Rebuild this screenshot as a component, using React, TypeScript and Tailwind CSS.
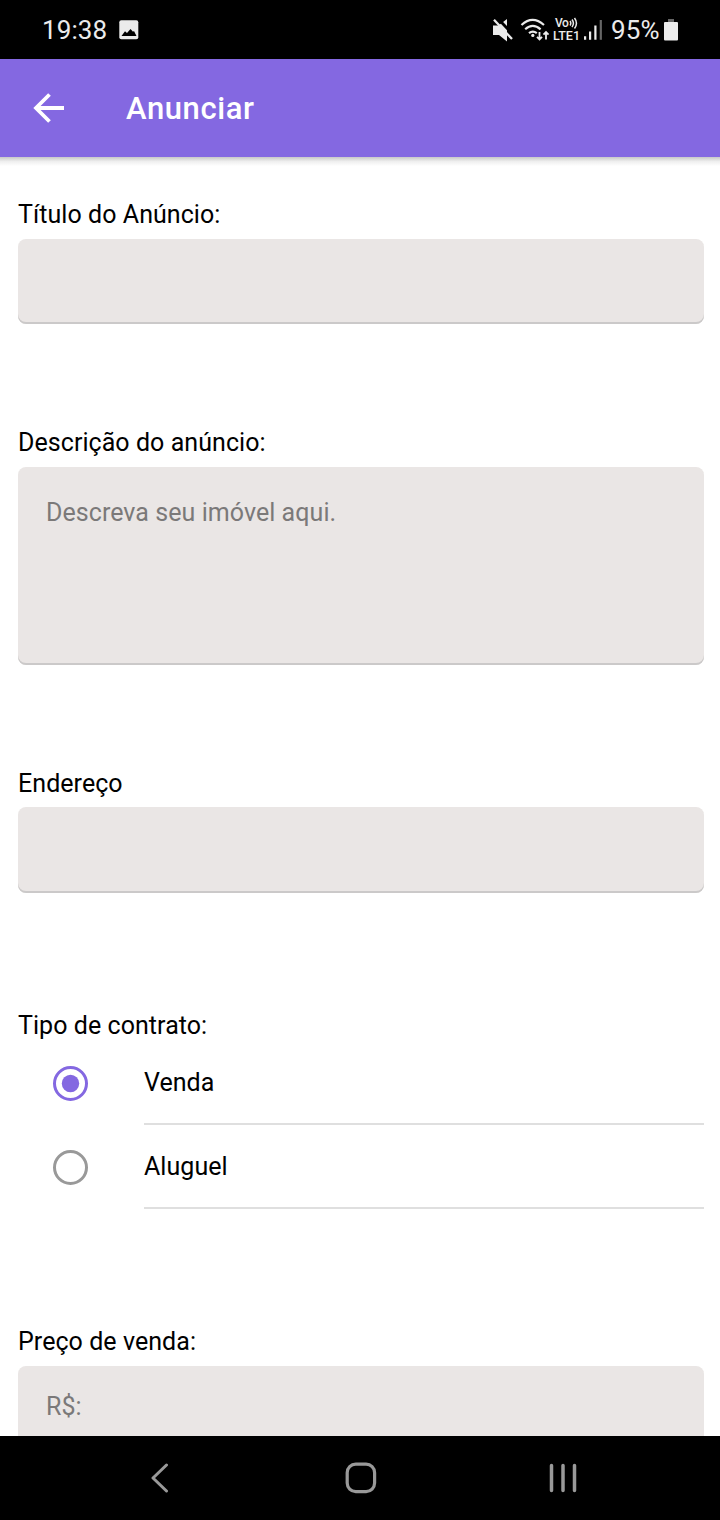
import type { ReactNode } from "react";

function Label({ children, className = "" }: { children: ReactNode; className?: string }) {
  return (
    <div className={`h-[32px] shrink-0 text-[25px] leading-[34px] tracking-[0.06px] whitespace-nowrap text-black ${className}`}>
      <span>{children}</span>
    </div>
  );
}

function Field({ placeholder, className = "" }: { placeholder?: string; className?: string }) {
  return (
    <div
      className={`w-[686px] shrink-0 overflow-hidden rounded-[8px] bg-[#eae6e5] pl-[28px] text-[25px] leading-[34px] tracking-[0.06px] text-[#7b7979] shadow-[inset_0_-2px_0_#cbc9c9] ${className}`}
    >
      {placeholder}
    </div>
  );
}

function Option({ label, checked = false }: { label: string; checked?: boolean }) {
  return (
    <div className="flex h-[84px] shrink-0 items-stretch">
      <div className="flex w-[126px] items-center pl-[35px]">
        <svg width="35" height="35" viewBox="0 0 35 35" fill="none">
          <circle cx="17.5" cy="17.5" r="16" stroke={checked ? "#8468e1" : "#999999"} strokeWidth="3" />
          {checked && <circle cx="17.5" cy="17.5" r="8.7" fill="#8468e1" />}
        </svg>
      </div>
      <div className="flex w-[560px] items-center border-b-2 border-[#dfdfdf] pt-[2px] text-[25px] leading-[32px] tracking-[0.06px] text-black">
        {label}
      </div>
    </div>
  );
}

function StatusBar() {
  return (
    <div className="flex h-[59px] shrink-0 items-center bg-black text-[#ebebeb]">
      <span className="ml-[42px] w-[77px] text-[26px] leading-[30px] tracking-[0.1px] whitespace-nowrap">19:38</span>
      <svg width="20" height="20" viewBox="0 0 20 20">
        <rect x="0.3" y="0.3" width="19" height="19" rx="2" fill="#ebebeb" />
        <path d="M2.5 16 6 11.2 8 13 11.5 9 14 11.8 15 11 17.5 16Z" fill="#000" />
      </svg>
      <svg className="ml-[353px]" width="22" height="24" viewBox="0 0 22 24" fill="none">
        <path d="M1 7.5h5.5L15 1v22.5L7 17H1Z" fill="#ebebeb" />
        <path d="M4.5 -1 22.5 18.2" stroke="#000" strokeWidth="2.8" />
        <path d="M2 1.8 20 21" stroke="#ebebeb" strokeWidth="2.3" />
      </svg>
      <svg className="ml-[6px]" width="30" height="26" viewBox="0 0 30 26" fill="none" stroke="#ebebeb">
        <path d="M1.5 8Q12.5 -2.2 24 8M5.2 12.3Q12.7 5.5 20.6 12.3M9 16.1Q12.8 13 16.8 16.1" strokeWidth="2.2" />
        <circle cx="12.8" cy="18.4" r="1.6" fill="#ebebeb" stroke="none" />
        <path d="M19.5 15v7M17 19.8l2.5 2.7 2.5-2.7M26 22.5v-7M23.5 17.7l2.5-2.7 2.5 2.7" strokeWidth="1.8" />
      </svg>
      <div className="ml-[3px] flex w-[32px] flex-col font-medium">
        <div className="flex h-[12px] items-center pl-[2px]">
          <span className="text-[12px] leading-[12px] tracking-[-0.4px]">Vo</span>
          <svg width="10" height="12" viewBox="0 0 10 12" fill="none" stroke="#ebebeb" strokeWidth="1.5">
            <path d="M1 4Q2.6 6.2 1 8.5M3 2.5Q5.8 6.2 3 10M5.5 1Q9.4 6.2 5.5 11.5" />
          </svg>
        </div>
        <span className="text-[12.5px] leading-[13px] whitespace-nowrap">LTE1</span>
      </div>
      <svg className="-ml-[1px]" width="20" height="22" viewBox="0 0 20 22">
        <path d="M0 17.3h2.2v3.5H0ZM5 12.5h2.2v8.3H5ZM10.3 6.5h2.2v14.3h-2.2Z" fill="#ebebeb" />
        <path d="M15.7 1h2.2v19.8h-2.2Z" fill="#666666" />
      </svg>
      <span className="ml-[7px] w-[53px] text-[26px] leading-[30px] tracking-[0.2px] whitespace-nowrap">95%</span>
      <svg width="14" height="22" viewBox="0 0 14 22">
        <path d="M4 0h6v4H4Z" fill="#666666" />
        <rect y="3" width="14" height="18.5" rx="1" fill="#ebebeb" />
      </svg>
    </div>
  );
}

export default function App() {
  return (
    <div className="flex h-[1520px] w-[720px] flex-col overflow-hidden bg-white font-[Roboto,sans-serif]">
      <StatusBar />
      <header className="flex h-[98px] shrink-0 items-center bg-[#8468e1] text-white">
        <svg className="ml-[33px]" width="32" height="32" viewBox="0 0 32 32" fill="none" stroke="#fff" strokeWidth="3.8">
          <path d="M31 16H3M16.5 2.5 3 16 16.5 29.5" />
        </svg>
        <h1 className="ml-[61px] pt-[2px] text-[31px] leading-[40px] font-medium tracking-[0.6px]">Anunciar</h1>
      </header>
      <div className="h-[9px] shrink-0 bg-linear-to-b from-[#c8c8c8] via-[#efefef] to-white" />
      <main className="flex min-h-0 flex-1 flex-col overflow-hidden pl-[18px]">
        <Label className="mt-[32px]">Título do Anúncio:</Label>
        <Field className="mt-[9px] h-[85px]" />
        <Label className="mt-[102px]">Descrição do anúncio:</Label>
        <Field className="mt-[9px] h-[198px] pt-[29px]" placeholder="Descreva seu imóvel aqui." />
        <Label className="mt-[102px]">Endereço</Label>
        <Field className="mt-[8px] h-[86px]" />
        <Label className="mt-[116px]">Tipo de contrato:</Label>
        <Option label="Venda" checked />
        <Option label="Aluguel" />
        <Label className="mt-[116px]">Preço de venda:</Label>
        <Field className="mt-[9px] h-[86px] pt-[24px]" placeholder="R$:" />
      </main>
      <nav className="flex h-[84px] shrink-0 items-center bg-black">
        <svg className="ml-[150px]" width="20" height="30" viewBox="0 0 20 30" fill="none" stroke="#999" strokeWidth="3" strokeLinecap="round" strokeLinejoin="round">
          <path d="M16.5 2 3 15 16.5 28" />
        </svg>
        <svg className="ml-[175px]" width="32" height="32" viewBox="0 0 32 32" fill="none" stroke="#999" strokeWidth="3.2">
          <rect x="2.2" y="2.2" width="27.4" height="27.4" rx="8.5" />
        </svg>
        <svg className="ml-[171px]" width="30" height="30" viewBox="0 0 30 30" stroke="#999" strokeWidth="3.5" strokeLinecap="round">
          <path d="M3.5 2.5v25M15 2.5v25M26.5 2.5v25" />
        </svg>
      </nav>
    </div>
  );
}
